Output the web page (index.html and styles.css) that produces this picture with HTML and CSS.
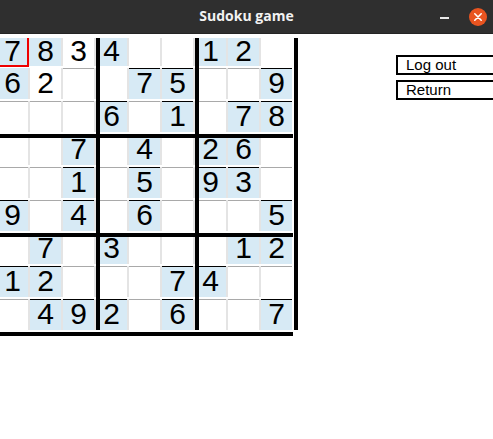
FILE: index.html
```html
<!DOCTYPE html>
<html lang="en">
<head>
<meta charset="utf-8">
<title>Sudoku game</title>
<link rel="stylesheet" href="styles.css">
</head>
<body>
<div class="window">
  <header class="titlebar">
    <div class="tb-side"></div>
    <div class="title">Sudoku game</div>
    <div class="tb-side controls">
      <span class="minimize"></span>
      <span class="close"><svg width="18" height="18" viewBox="0 0 18 18"><circle cx="9" cy="9" r="9" fill="#e95420"/><path d="M5.8 5.8 L12.2 12.2 M12.2 5.8 L5.8 12.2" stroke="#fff" stroke-width="1.6" stroke-linecap="round"/></svg></span>
    </div>
  </header>
  <main class="content">
    <div class="board">
      <div class="rows">
        <div class="row r0">
          <div class="c g">7</div><div class="c g">8</div><div class="c">3</div>
          <div class="c g">4</div><div class="c"></div><div class="c"></div>
          <div class="c g">1</div><div class="c g">2</div><div class="c"></div>
        </div>
        <div class="row">
          <div class="c g">6</div><div class="c">2</div><div class="c tg"></div>
          <div class="c"></div><div class="c g tb">7</div><div class="c g tb">5</div>
          <div class="c tg"></div><div class="c tg"></div><div class="c g tb">9</div>
        </div>
        <div class="row">
          <div class="c tg"></div><div class="c tg"></div><div class="c tg"></div>
          <div class="c g tb">6</div><div class="c tg"></div><div class="c g tb">1</div>
          <div class="c tg"></div><div class="c g tb">7</div><div class="c g tb">8</div>
        </div>
        <div class="row">
          <div class="c"></div><div class="c"></div><div class="c g">7</div>
          <div class="c"></div><div class="c g">4</div><div class="c"></div>
          <div class="c g">2</div><div class="c g">6</div><div class="c"></div>
        </div>
        <div class="row">
          <div class="c tg"></div><div class="c tg"></div><div class="c g tb">1</div>
          <div class="c tg"></div><div class="c g tb">5</div><div class="c tg"></div>
          <div class="c g tb">9</div><div class="c g tb">3</div><div class="c tg"></div>
        </div>
        <div class="row">
          <div class="c g tb">9</div><div class="c tg"></div><div class="c g tb">4</div>
          <div class="c tg"></div><div class="c g tb">6</div><div class="c tg"></div>
          <div class="c tg"></div><div class="c tg"></div><div class="c g tb">5</div>
        </div>
        <div class="row">
          <div class="c"></div><div class="c g">7</div><div class="c"></div>
          <div class="c g">3</div><div class="c"></div><div class="c"></div>
          <div class="c"></div><div class="c g">1</div><div class="c g">2</div>
        </div>
        <div class="row">
          <div class="c g tb">1</div><div class="c g tb">2</div><div class="c tg"></div>
          <div class="c tg"></div><div class="c tg"></div><div class="c g tb">7</div>
          <div class="c g tb">4</div><div class="c tg"></div><div class="c tg"></div>
        </div>
        <div class="row">
          <div class="c tg"></div><div class="c g tb">4</div><div class="c g tb">9</div>
          <div class="c g tb">2</div><div class="c tg"></div><div class="c g tb">6</div>
          <div class="c tg"></div><div class="c tg"></div><div class="c g tb">7</div>
        </div>
      </div>
      <div class="vline v1"></div>
      <div class="vline v2"></div>
      <div class="vline v3"></div>
      <div class="hline h1"></div>
      <div class="hline h2"></div>
      <div class="hline h3"></div>
      <div class="focus"></div>
    </div>
    <div class="actions">
      <button class="btn" type="button">Log out</button>
      <button class="btn" type="button">Return</button>
    </div>
  </main>
</div>
</body>
</html>
```

FILE: styles.css
```css
html, body {
  margin: 0;
  padding: 0;
  background: #ffffff;
  overflow: hidden;
}

.window {
  width: 493px;
  height: 439px;
  overflow: hidden;
  background: #ffffff;
}

.titlebar {
  height: 34px;
  box-sizing: border-box;
  background: #2f2f2f;
  border-bottom: 1px solid #242424;
  display: grid;
  grid-template-columns: 1fr auto 1fr;
  align-items: center;
}

.title {
  font-family: "Open Sans", "DejaVu Sans", sans-serif;
  font-weight: 700;
  font-size: 14px;
  color: #f2f2f2;
  line-height: 1;
  padding-bottom: 1px;
}

.controls {
  display: flex;
  justify-content: flex-end;
  align-items: center;
  gap: 20px;
  padding-right: 6px;
}

.minimize {
  display: block;
  width: 9px;
  height: 2px;
  background: #e8e8e8;
  margin-top: 3px;
}

.close {
  display: block;
  width: 18px;
  height: 18px;
}

.close svg {
  display: block;
}

.content {
  display: flex;
  align-items: flex-start;
}

.board {
  position: relative;
  flex: none;
  width: 298px;
  height: 298px;
  margin-top: 4px;
}

.rows {
  display: flex;
  flex-direction: column;
  gap: 2px;
  margin: 0 0 0 -3px;
}

.row {
  display: flex;
  gap: 2px;
  width: max-content;
  background: #e4e4e4;
}

.c {
  width: 31px;
  height: 31px;
  box-sizing: border-box;
  background: #ffffff;
  border-top: 1px solid transparent;
  font-family: "Liberation Sans", Arial, sans-serif;
  font-size: 30px;
  line-height: 27px;
  text-align: center;
  color: #000000;
}

.r0 .c {
  height: 28px;
  line-height: 24px;
}

.g {
  background: #d7eaf5;
}

.tb {
  border-top-color: #000000;
}

.tg {
  border-top-color: #a9a9a9;
}

.vline {
  position: absolute;
  top: 0;
  width: 4px;
  height: 292px;
  background: #000000;
}

.v1 { left: 96px; }
.v2 { left: 195px; }
.v3 { left: 294px; }

.hline {
  position: absolute;
  left: 0;
  width: 293px;
  height: 4px;
  background: #000000;
}

.h1 { top: 96px; }
.h2 { top: 195px; }
.h3 { top: 294px; }

.focus {
  position: absolute;
  left: 0;
  top: 0;
  width: 29px;
  height: 29px;
  box-sizing: border-box;
  border-right: 2px solid #ee0000;
  border-bottom: 2px solid #ee0000;
}

.actions {
  flex: none;
  display: flex;
  flex-direction: column;
  gap: 5px;
  margin: 21px 0 0 98px;
}

.btn {
  display: block;
  width: 110px;
  height: 20px;
  box-sizing: border-box;
  margin: 0;
  border: 2px solid #000000;
  border-radius: 0;
  background: #ffffff;
  padding: 0 0 0 8px;
  font-family: "Liberation Sans", Arial, sans-serif;
  font-size: 15px;
  line-height: 16px;
  text-align: left;
  color: #000000;
}
```
